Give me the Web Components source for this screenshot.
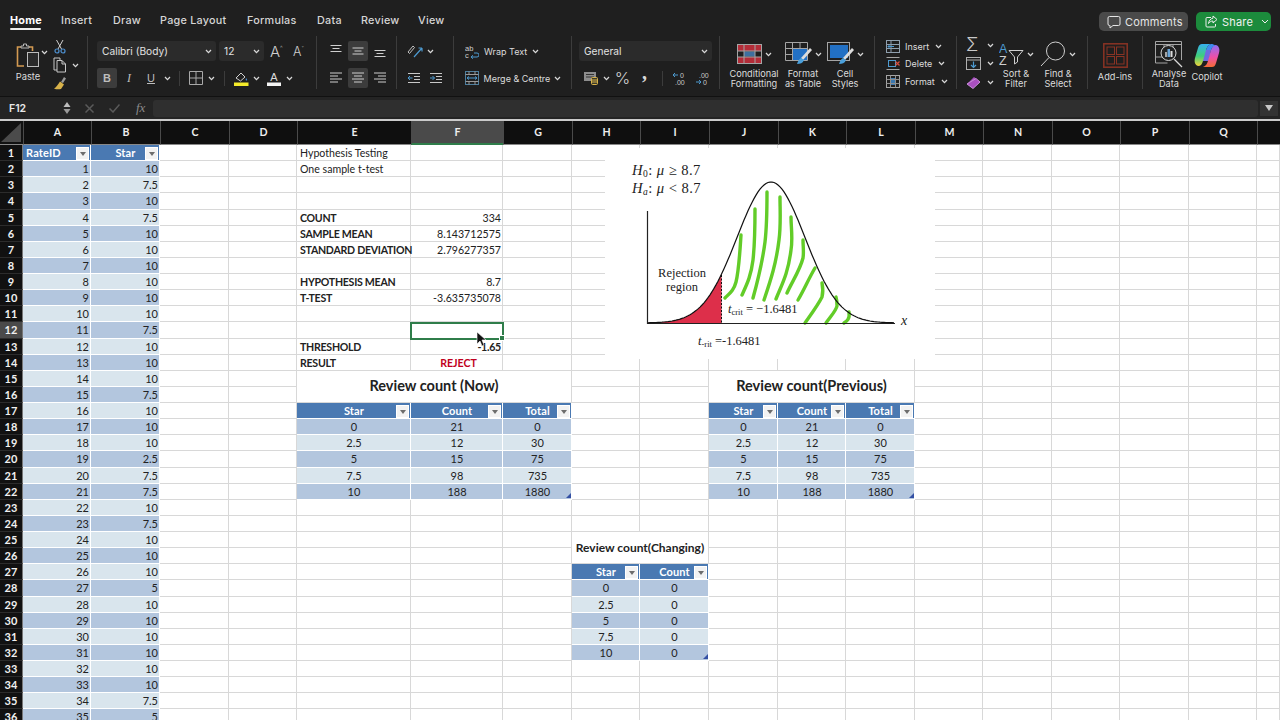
<!DOCTYPE html>
<html>
<head>
<meta charset="utf-8">
<title>Hypothesis Testing</title>
<style>
  html, body { margin: 0; padding: 0; background: #1f1f1f; }
  body { width: 1280px; height: 720px; overflow: hidden; font-family: Inter, "Liberation Sans", sans-serif; }
</style>
</head>
<body>
<xl-tabs></xl-tabs>
<xl-ribbon></xl-ribbon>
<xl-formula></xl-formula>
<xl-sheet></xl-sheet>

<script>
// componente base: shadow abierto con el html que devuelve la clase
class XlBase extends HTMLElement {
  constructor() {
    super();
    this.attachShadow({ mode: "open" });
  }
  connectedCallback() {
    this.shadowRoot.innerHTML = this.html();
  }
}

class XlChev extends XlBase {
  html() {
    return `<style>:host{display:inline-flex;align-items:center;flex:none}</style>
    <svg width="7" height="5" viewBox="0 0 7 5"><path d="M1 1l2.5 2.6L6 1" fill="none" stroke="#d8d8d8" stroke-width="1.3"/></svg>`;
  }
}
customElements.define("xl-chev", XlChev);

// lineas de alineacion: w = anchos separados por coma, a = left|center|right, t = desplazamiento
class XlLines extends XlBase {
  html() {
    const a = this.getAttribute("a") || "center";
    const t = +(this.getAttribute("t") || 0);
    const g = +(this.getAttribute("g") || 3);
    const ws = this.getAttribute("w").split(",").map(Number);
    const l = ws.map((w, i) => {
      const x = a === "left" ? 1 : a === "right" ? 13 - w : 7 - w / 2;
      const y = t + i * g + 0.5;
      return `<path d="M${x} ${y}h${w}" stroke="#cfcfcf" stroke-width="1"/>`;
    }).join("");
    return `<style>:host{display:inline-flex;flex:none}</style><svg width="14" height="14" viewBox="0 0 14 14">${l}</svg>`;
  }
}
customElements.define("xl-lines", XlLines);

class XlGroup extends XlBase {
  html() {
    return `<style>
      :host{display:flex;flex:none;box-sizing:border-box;height:53px;border-right:1px solid #3c3c3c;width:${this.getAttribute("w")}px}
    </style><slot></slot>`;
  }
}
customElements.define("xl-group", XlGroup);

// boton grande con icono arriba y etiqueta abajo
class XlBig extends XlBase {
  html() {
    return `<style>
      :host{display:flex;flex-direction:column;align-items:center;flex:none;padding-top:3px;font-size:9.2px;line-height:10px;color:#dcdcdc;text-align:center;white-space:nowrap}
      .top{height:32.5px;display:flex;align-items:center;justify-content:center;gap:3px}
    </style><div class="top"><slot name="icon"></slot></div><div><slot></slot></div>`;
  }
}
customElements.define("xl-big", XlBig);

class XlTabs extends XlBase {
  html() {
    const tabs = [["Home", 10], ["Insert", 61], ["Draw", 113], ["Page Layout", 160], ["Formulas", 247], ["Data", 317], ["Review", 361], ["View", 418]];
    const anchos = [31, 30, 26, 64, 48, 24, 37, 26];
    return `<style>
      :host{display:flex;height:36px;background:#1f1f1f;color:#d6d6d6;font-size:10.8px;font-weight:500;letter-spacing:.25px}
      .lista{display:flex;padding:0 0 0 10px}
      .tab{height:36px;box-sizing:border-box;padding-top:14px;white-space:nowrap;text-align:center}
      .on{color:#fff;font-weight:700;position:relative}
      .on::after{content:"";position:absolute;left:0;right:0;top:28px;height:2px;background:#eee;border-radius:1px}
      .der{margin-left:auto;display:flex;gap:8px;padding:12px 9px 0 0;align-items:flex-start}
      .btn{height:19px;border-radius:5px;display:flex;align-items:center;gap:4px;box-sizing:border-box;font-size:11px;letter-spacing:.2px;font-weight:400}
      .com{width:89px;background:#4a4a4a;padding-left:8px;color:#e6e6e6}
      .sha{width:75px;background:#1c8b3c;padding-left:9px;color:#f2f2f2}
    </style>
    <div class="lista">${tabs.map((t, i) => `<div class="tab ${i ? "" : "on"}" style="width:${anchos[i]}px;margin-right:${i < 7 ? tabs[i + 1][1] - t[1] - anchos[i] : 0}px">${t[0]}</div>`).join("")}</div>
    <div class="der">
      <div class="btn com"><svg width="14" height="14" viewBox="0 0 14 14"><path d="M2.5 1.5h9a1.5 1.5 0 0 1 1.5 1.5v6a1.5 1.5 0 0 1-1.5 1.5H6l-3 2.5v-2.5h-.5A1.5 1.5 0 0 1 1 9V3a1.5 1.5 0 0 1 1.5-1.5z" fill="none" stroke="#e6e6e6"/></svg>Comments</div>
      <div class="btn sha"><svg width="13" height="13" viewBox="0 0 13 13"><path d="M6 2.5H2a1 1 0 0 0-1 1V11a1 1 0 0 0 1 1h7.500a1 1 0 0 0 1-1V9" fill="none" stroke="#eee"/><path d="M8 1l4 3.500-4 3.500V6c-2 0-3.500 1-4.500 2.500C3.800 6 5.500 3.500 8 3.200z" fill="none" stroke="#eee"/></svg>Share<svg style="margin-left:4px" width="8" height="5" viewBox="0 0 8 5"><path d="M1 1l3 3 3-3" fill="none" stroke="#eee"/></svg></div>
    </div>`;
  }
}
customElements.define("xl-tabs", XlTabs);

class XlRibbon extends XlBase {
  html() {
    return `<style>
      :host{display:flex;height:61px;background:#1f1f1f;color:#dcdcdc;font-size:9px;box-sizing:border-box;border-bottom:1px solid #111}
      .col{display:flex;flex-direction:column;padding-top:5px;gap:7px}
      .row{display:flex;align-items:center;height:20px;flex:none}
      .box{background:#2b2b2b;border-radius:3px;height:20px;display:flex;align-items:center;box-sizing:border-box;padding:0 4px 0 5px;justify-content:space-between;font-size:10.2px;color:#e2e2e2}
      .act{width:20px;height:20px;background:#3c3c3c;border-radius:2px;display:flex;align-items:center;justify-content:center;flex:none}
      .ic{width:20px;height:20px;display:flex;align-items:center;justify-content:center;flex:none}
      .sep{width:1px;height:15px;background:#3c3c3c;flex:none}
      .small{display:flex;flex-direction:column;justify-content:space-between}
      svg{display:block;flex:none}
      .t{white-space:nowrap}
    </style>

    <xl-group w="88">
      <xl-big style="width:30px;margin-left:13px;font-size:9.4px">
        <svg slot="icon" width="24" height="25" viewBox="0 0 24 25"><path d="M5 4H1.500v19H8" fill="none" stroke="#d39a52" stroke-width="1.6"/><path d="M13 4h3.500v4" fill="none" stroke="#d39a52" stroke-width="1.6"/><path d="M5 5V3h2.500V1h3v2H13v2z" fill="none" stroke="#b9b9b9"/><rect x="11.500" y="9.500" width="11" height="14" fill="#2a2a2a" stroke="#bdbdbd"/></svg>
        Paste
      </xl-big>
      <xl-chev style="height:7px;align-self:flex-start;margin:13px 0 0 -2px"></xl-chev>
      <div style="display:flex;flex-direction:column;margin-left:5px;padding-top:4px;gap:3px">
        <svg width="14" height="14" viewBox="0 0 14 14"><path d="M3.500 0l5 9M10 0L5 9" stroke="#cfcfcf" stroke-width="1"/><circle cx="4" cy="11" r="2" fill="none" stroke="#4d8fcf" stroke-width="1.200"/><circle cx="10" cy="11" r="2" fill="none" stroke="#4d8fcf" stroke-width="1.200"/></svg>
        <div style="display:flex;align-items:center;gap:5px;height:17px">
          <svg width="14" height="16" viewBox="0 0 14 16"><path d="M4 13H1V1h6v2" fill="none" stroke="#c8c8c8"/><path d="M4 3.500h5l3.500 3.500v8H4z" fill="none" stroke="#c8c8c8"/><path d="M9 3.500V7h3.500" fill="none" stroke="#c8c8c8"/></svg>
          <xl-chev></xl-chev>
        </div>
        <svg width="14" height="14" viewBox="0 0 14 14"><path d="M8 6l3-5 2 1.500L10 7z" fill="#9a9a9a"/><path d="M7 5.500l4 3-3 4.500c-2 .5-5 .5-7-.5 2-1 4-4 6-7z" fill="#d8b24a"/></svg>
      </div>
    </xl-group>

    <xl-group w="229">
      <div class="col" style="padding-left:9px">
        <div class="row">
          <div class="box" style="width:119px"><span class="t">Calibri (Body)</span><xl-chev></xl-chev></div>
          <div class="box" style="width:45px;margin-left:3px"><span>12</span><xl-chev></xl-chev></div>
          <span style="font-size:15px;font-weight:300;margin-left:6px;width:23px;color:#cfcfcf">A<sup style="font-size:6px;vertical-align:7px">^</sup></span>
          <span style="font-size:12.500px;font-weight:300;width:20px;color:#cfcfcf">A<sup style="font-size:6px;vertical-align:5px">ˇ</sup></span>
        </div>
        <div class="row">
          <div class="act" style="font:700 11px 'Liberation Sans';color:#bdbdbd">B</div>
          <div class="ic" style="margin-left:2px;font:italic 12px 'Liberation Serif';color:#bdbdbd">I</div>
          <div class="ic" style="margin-left:2px;font:11px 'Liberation Sans';color:#bdbdbd;text-decoration:underline">U</div>
          <xl-chev style="margin-left:3px"></xl-chev>
          <div class="sep" style="margin-left:8px"></div>
          <svg style="margin-left:9px" width="14" height="14" viewBox="0 0 14 14"><path d="M.5.5h13v13H.5zM7 .5v13M.5 7h13" fill="none" stroke="#a9a9a9"/></svg>
          <xl-chev style="margin-left:5px"></xl-chev>
          <div class="sep" style="margin-left:9px"></div>
          <svg style="margin-left:9px" width="15" height="15" viewBox="0 0 15 15"><path d="M2 7l5-5 4 4-4.500 4z" fill="none" stroke="#d0d0d0"/><path d="M12 7c1 1.200 1.500 2 .8 2.500-.8.400-1.500-.6-.8-2.500z" fill="#4d8fcf"/><rect x="0" y="11.500" width="14.500" height="3.500" fill="#f4ea2a"/></svg>
          <xl-chev style="margin-left:4px"></xl-chev>
          <svg style="margin-left:7px" width="14" height="15" viewBox="0 0 14 15"><text x="7" y="9.500" font-family="Liberation Sans" font-size="11" text-anchor="middle" fill="#dcdcdc">A</text><rect y="11.500" width="14" height="3.500" fill="#f4f4f4"/></svg>
          <xl-chev style="margin-left:5px"></xl-chev>
        </div>
      </div>
    </xl-group>

    <xl-group w="80">
      <div class="col" style="padding-left:9px">
        <div class="row">
          <div class="ic"><xl-lines w="11,7,11" t="1"></xl-lines></div>
          <div class="act" style="margin-left:2px"><xl-lines w="11,7,11" t="3.500"></xl-lines></div>
          <div class="ic" style="margin-left:2px"><xl-lines w="11,7,11" t="6"></xl-lines></div>
        </div>
        <div class="row">
          <div class="ic"><xl-lines w="12,8,12,8" a="left" t="1.500"></xl-lines></div>
          <div class="act" style="margin-left:2px"><xl-lines w="12,8,12,8" t="1.500"></xl-lines></div>
          <div class="ic" style="margin-left:2px"><xl-lines w="12,8,12,8" a="right" t="1.500"></xl-lines></div>
        </div>
      </div>
    </xl-group>

    <xl-group w="57">
      <div class="col" style="padding-left:10px">
        <div class="row">
          <svg width="16" height="15" viewBox="0 0 16 15"><path d="M1 8l5-6 1.500 1.500L2.500 9.500z" fill="none" stroke="#c0c0c0"/><path d="M7 13L15 4M15 4h-3.500M15 4v3.500" fill="none" stroke="#4d9ad0" stroke-width="1.200"/></svg>
          <xl-chev style="margin-left:4px"></xl-chev>
        </div>
        <div class="row" style="gap:8px">
          <svg width="14" height="13" viewBox="0 0 14 13"><path d="M1 1.500h12M7 4.500h6M7 7.500h6M1 10.500h12" stroke="#c8c8c8"/><path d="M5.500 6H1M3 4L1 6l2 2" fill="none" stroke="#4d9ad0"/></svg>
          <svg width="14" height="13" viewBox="0 0 14 13"><path d="M1 1.500h12M7 4.500h6M7 7.500h6M1 10.500h12" stroke="#c8c8c8"/><path d="M1 6h4.500M3.500 4l2 2-2 2" fill="none" stroke="#4d9ad0"/></svg>
        </div>
      </div>
    </xl-group>

    <xl-group w="118">
      <div class="col" style="padding-left:11px">
        <div class="row">
          <svg width="14" height="15" viewBox="0 0 14 15"><text x="0" y="6.500" font-family="Liberation Sans" font-size="7.500" fill="#d0d0d0">ab</text><text x="0" y="14" font-family="Liberation Sans" font-size="7.500" fill="#d0d0d0">c</text><path d="M9 9h3a1.500 1.500 0 0 1 0 4H6.500M8 11.300l-2 1.700 2 1.700" fill="none" stroke="#4d9ad0"/></svg>
          <span class="t" style="margin-left:5px">Wrap Text</span><xl-chev style="margin-left:5px"></xl-chev>
        </div>
        <div class="row">
          <svg width="14" height="14" viewBox="0 0 14 14"><rect x=".5" y=".5" width="13" height="13" fill="none" stroke="#4d7f9f"/><path d="M.5 3.500h13M.5 10.500h13M4 .5v3M10 .5v3M4 10.500v3M10 10.500v3" stroke="#9a9a9a"/><path d="M2 7h10M4 5.500L2 7l2 1.500M10 5.500L12 7l-2 1.500" fill="none" stroke="#4d9ad0"/></svg>
          <span class="t" style="margin-left:4.500px">Merge &amp; Centre</span><xl-chev style="margin-left:4px"></xl-chev>
        </div>
      </div>
    </xl-group>

    <xl-group w="148">
      <div class="col" style="padding-left:7px">
        <div class="row"><div class="box" style="width:133px"><span>General</span><xl-chev></xl-chev></div></div>
        <div class="row">
          <svg style="margin-left:5px" width="14" height="14" viewBox="0 0 14 14"><rect x="0" y="1" width="12" height="9" fill="#8d8d8d"/><path d="M2 3.500h8M2 6h8" stroke="#333"/><rect x="7.500" y="6.500" width="6" height="7" rx="1" fill="#3a3a2a" stroke="#d8b24a"/><path d="M8 9h5M8 11h5" stroke="#d8b24a"/></svg>
          <xl-chev style="margin-left:5px"></xl-chev>
          <span style="font-size:16.500px;font-weight:300;margin-left:3px;width:19px;color:#d0d0d0;text-align:center">%</span>
          <span style="font:700 20px 'Liberation Serif';margin-left:10px;width:10px;color:#d8d8d8;position:relative;top:-6px">,</span>
          <div class="sep" style="margin-left:10px"></div>
          <svg style="margin-left:9px" width="15" height="15" viewBox="0 0 15 15"><path d="M6 4H1M3 2L1 4l2 2" fill="none" stroke="#4d9ad0"/><text x="8" y="7" font-family="Liberation Sans" font-size="7" fill="#c8c8c8">0</text><text x="3" y="14" font-family="Liberation Sans" font-size="7" fill="#c8c8c8">.00</text></svg>
          <svg style="margin-left:8px" width="15" height="15" viewBox="0 0 15 15"><text x="4" y="7" font-family="Liberation Sans" font-size="7" fill="#c8c8c8">.00</text><path d="M1 11h5M4 9l2 2-2 2" fill="none" stroke="#4d9ad0"/><text x="8" y="14" font-family="Liberation Sans" font-size="7" fill="#c8c8c8">0</text></svg>
        </div>
      </div>
    </xl-group>

    <xl-group w="155">
      <xl-big style="width:48px;margin-left:10px">
        <svg slot="icon" width="25" height="20" viewBox="0 0 25 20"><rect x=".5" y=".5" width="24" height="19" fill="none" stroke="#a5a5a5"/><rect x="1" y="1" width="23" height="6" fill="#b32c38"/><rect x="1" y="13" width="23" height="6" fill="#b32c38"/><rect x="7" y="7.500" width="11" height="5" fill="#3d6f9f"/><path d="M.5 7h24M.5 13h24M7 .5v19M18 .5v19" stroke="#a5a5a5"/></svg>
        <xl-chev slot="icon"></xl-chev>
        Conditional<br>Formatting
      </xl-big>
      <xl-big style="width:44px;margin-left:3px">
        <svg slot="icon" width="27" height="24" viewBox="0 0 27 24"><path d="M.5.500h22v18H.5zM.5 6.500h22M.5 12.500h22M7.500.5v18M15 .5v18" fill="none" stroke="#a5a5a5"/><rect x="8" y="7" width="14" height="11" fill="#2270c4"/><path d="M25 6l-9 10 2 2 9-10z" fill="#dcdcdc"/><path d="M16 16c-2 1-3 3-4 6 3 0 6-1 7-4z" fill="#4aa0dc"/></svg>
        <xl-chev slot="icon"></xl-chev>
        Format<br>as Table
      </xl-big>
      <xl-big style="width:40px">
        <svg slot="icon" width="27" height="24" viewBox="0 0 27 24"><rect x=".5" y=".5" width="22" height="18" fill="none" stroke="#a5a5a5"/><rect x="3" y="3" width="18" height="13" fill="#2270c4"/><path d="M25 6l-9 10 2 2 9-10z" fill="#dcdcdc"/><path d="M16 16c-2 1-3 3-4 6 3 0 6-1 7-4z" fill="#4aa0dc"/></svg>
        <xl-chev slot="icon"></xl-chev>
        Cell<br>Styles
      </xl-big>
    </xl-group>

    <xl-group w="82">
      <div class="small" style="padding:2px 0 0 11px;height:51px">
        <div class="row" style="height:16px"><svg width="14" height="13" viewBox="0 0 14 13"><rect x=".5" y=".5" width="13" height="12" fill="none" stroke="#8f9fae"/><path d="M.5 4.500h13M.5 8.500h13M5 .5v12" stroke="#8f9fae"/><path d="M8 6.500H2M4 4.500l-2 2 2 2" fill="none" stroke="#4d9ad0"/></svg><span style="margin-left:5px">Insert</span><xl-chev style="margin-left:6px"></xl-chev></div>
        <div class="row" style="height:16px"><svg width="14" height="13" viewBox="0 0 14 13"><path d="M.5.500h13M.5 12.500h13" stroke="#a5a5a5"/><rect x="2.500" y="3.500" width="7" height="6" fill="none" stroke="#4d9ad0"/><path d="M9.500 4.500l4 4M13.500 4.500l-4 4" stroke="#d64a3a" stroke-width="1.200"/></svg><span style="margin-left:5px">Delete</span><xl-chev style="margin-left:6px"></xl-chev></div>
        <div class="row" style="height:16px"><svg width="14" height="14" viewBox="0 0 14 14"><rect x=".5" y="1.500" width="13" height="12" fill="none" stroke="#a5a5a5"/><rect x="4" y="4" width="6" height="7" fill="#3a78b0"/><path d="M.5 5.500h13M.5 9.500h13M4.500 1.500v12M9.500 1.500v12" stroke="#8f8f8f"/></svg><span style="margin-left:5px">Format</span><xl-chev style="margin-left:6px"></xl-chev></div>
      </div>
    </xl-group>

    <xl-group w="131">
      <div class="small" style="padding:1px 0 0 9px;height:53px;width:28px;flex:none">
        <div class="row" style="height:16px;justify-content:space-between"><span style="font-size:18px;font-weight:300;color:#c8c8c8;line-height:16px">Σ</span><xl-chev></xl-chev></div>
        <div class="row" style="height:16px;justify-content:space-between"><svg width="15" height="13" viewBox="0 0 15 13"><rect x=".5" y=".5" width="14" height="12" fill="none" stroke="#b0b0b0"/><path d="M.5 3h14" stroke="#b0b0b0"/><path d="M7.500 4.500v6M5 8l2.500 2.500L10 8" fill="none" stroke="#4d9ad0" stroke-width="1.200"/></svg><xl-chev></xl-chev></div>
        <div class="row" style="height:16px;justify-content:space-between"><svg width="15" height="13" viewBox="0 0 15 13"><path d="M1 8L8 1l6 5-7 6.500z" fill="#a94fc0"/><path d="M3.500 6.500L10 2.500l4 3.500-7 6.500L1 8z" fill="none" stroke="#c78fd8"/></svg><xl-chev></xl-chev></div>
      </div>
      <xl-big style="width:40px;margin-left:2px">
        <svg slot="icon" width="25" height="25" viewBox="0 0 25 25"><text x="0" y="11" font-family="Liberation Sans" font-size="12.500" fill="#4d9ad0">A</text><text x="0" y="23" font-family="Liberation Sans" font-size="12.500" fill="#cfcfcf">Z</text><path d="M10 8.500h14l-5.500 6.500v5l-3 2v-7z" fill="none" stroke="#cfcfcf"/></svg>
        <xl-chev slot="icon"></xl-chev>
        Sort &amp;<br>Filter
      </xl-big>
      <xl-big style="width:40px;margin-left:2px">
        <svg slot="icon" width="26" height="26" viewBox="0 0 26 26"><circle cx="15.500" cy="10" r="9" fill="none" stroke="#cfcfcf"/><path d="M9 16.500L1 25" stroke="#cfcfcf"/></svg>
        <xl-chev slot="icon"></xl-chev>
        Find &amp;<br>Select
      </xl-big>
    </xl-group>

    <xl-group w="55">
      <xl-big style="width:54px">
        <svg slot="icon" width="25" height="25" viewBox="0 0 25 25"><rect x=".8" y=".8" width="23.400" height="23.400" fill="none" stroke="#8a3324" stroke-width="1.500"/><rect x="4" y="4" width="7.500" height="7.500" fill="none" stroke="#8a3324"/><rect x="13.500" y="4" width="7.500" height="7.500" fill="none" stroke="#8a3324"/><rect x="4" y="13.500" width="7.500" height="7.500" fill="none" stroke="#8a3324"/><rect x="13.500" y="13.500" width="7.500" height="7.500" fill="none" stroke="#8a3324"/></svg>
        Add-ins
      </xl-big>
    </xl-group>

    <div style="display:flex;height:53px;flex:none">
      <xl-big style="width:40px;margin-left:6px">
        <svg slot="icon" width="28" height="27" viewBox="0 0 28 27"><path d="M.5 22V.5h26V19M.5 3.500h26M.5 16h8M.5 22h12M9 3.500V9M18 3.500V7" fill="none" stroke="#a5a5a5"/><circle cx="13.500" cy="12" r="7.500" fill="#222" stroke="#d8d8d8"/><rect x="10" y="11" width="2" height="5" fill="#a5a5a5"/><rect x="12.500" y="8" width="2.500" height="8" fill="#6aa5d8"/><rect x="15.500" y="10" width="2" height="6" fill="#dcdcdc"/><path d="M19 18l8 8" stroke="#d8d8d8" stroke-width="1.200"/></svg>
        Analyse<br>Data
      </xl-big>
      <xl-big style="width:36px">
        <svg slot="icon" width="26" height="25" viewBox="0 0 26 25">
          <defs>
            <linearGradient id="cp1" x1="0" y1="0" x2="0" y2="1"><stop offset="0" stop-color="#36b0f0"/><stop offset=".55" stop-color="#3fcf7a"/><stop offset="1" stop-color="#f0d23a"/></linearGradient>
            <linearGradient id="cp2" x1="0" y1="0" x2="0" y2="1"><stop offset="0" stop-color="#8c6ff5"/><stop offset=".55" stop-color="#ee4fa8"/><stop offset="1" stop-color="#f66c34"/></linearGradient>
          </defs>
          <path d="M10 7h7l-2 11H8z" fill="#6f6ae0"/>
          <path d="M8 1h9c-3 1-4 3-5 6L9 18c-1 3-2 5-5 5-3-1-4-4-3-8L4 5c1-3 2-4 4-4z" fill="url(#cp1)"/>
          <path d="M18 24H9c3-1 4-3 5-6l3-11c1-3 2-5 5-5 3 1 4 4 3 8l-3 10c-1 3-2 4-4 4z" fill="url(#cp2)"/>
          <path d="M8 1h9c2 0 3 .5 4 1.500-2 .5-3 2-4 4.500h-5c1-3 2-5 5-6z" fill="#3f8cf0"/>
        </svg>
        Copilot
      </xl-big>
    </div>`;
  }
}
customElements.define("xl-ribbon", XlRibbon);

class XlFormula extends XlBase {
  html() {
    return `<style>
      :host{display:flex;align-items:center;height:22px;background:#242424;color:#e8e8e8;border-bottom:2px solid #cbcbcb;font-size:10.5px;font-weight:600;box-sizing:content-box}
      .nom{padding-left:9px;flex:none;width:54px}
      .ent{flex:1;height:17px;background:#2f2f2f;border-radius:3px;margin:0 2px 0 0}
      .fl{width:18px;height:15px;background:#333;display:flex;align-items:center;justify-content:center;margin-right:2px;flex:none}
      svg{flex:none;display:block}
    </style>
    <div class="nom">F12</div>
    <svg width="8" height="14" viewBox="0 0 8 14"><path d="M4 1l3.500 5H.5z" fill="#bdbdbd"/><path d="M4 13L.5 8h7z" fill="#9a9a9a"/></svg>
    <svg style="margin-left:14px" width="9" height="9" viewBox="0 0 9 9"><path d="M.5.5l8 8M8.500.5l-8 8" stroke="#5a5a5a" stroke-width="1.500"/></svg>
    <svg style="margin-left:15px" width="11" height="9" viewBox="0 0 11 9"><path d="M.5 4.500l3.500 3.500 6.500-7.500" fill="none" stroke="#5a5a5a" stroke-width="1.500"/></svg>
    <span style="margin-left:16px;width:15px;font:italic 13px 'Liberation Serif';color:#8a8a8a">fx</span>
    <div class="ent" style="margin-left:2px"></div>
    <div class="fl"><svg width="8" height="6" viewBox="0 0 8 6"><path d="M0 0h8L4 6z" fill="#c8c8c8"/></svg></div>`;
  }
}
customElements.define("xl-formula", XlFormula);

// imagen pegada sobre la hoja: campana con region de rechazo
class XlChart extends XlBase {
  html() {
    const y = x => 173 - 141 * Math.exp(-((x - 161) ** 2) / (2 * 34 * 34));
    let curva = "", roja = "M38 173";
    for (let x = 38; x <= 285; x += 2) curva += (x === 38 ? "M" : "L") + x + " " + y(x).toFixed(1);
    for (let x = 38; x <= 111; x += 2) roja += "L" + x + " " + y(x).toFixed(1);
    roja += "L111.500 " + y(111.5).toFixed(1) + "L111.500 173Z";
    const verdes = [
      "M115 148C120 143 124 140 126 132C129 120 130 100 131 85",
      "M132 145C137 134 141 126 143 110C145 92 145 75 145 59",
      "M143 148C148 130 152 115 155 92C157 75 157 60 157 42",
      "M154 150C160 132 166 115 169 90C171 75 170 60 170 47",
      "M166 149C172 134 178 124 181 100C183 88 181 78 181 67",
      "M177 143C183 130 190 120 193 108C194 102 193 96 193 90",
      "M188 150C194 140 199 128 205 118",
      "M195 173C202 163 208 155 212 147C213 143 213 138 212 133",
      "M216 173C220 167 226 161 227 156C227 153 227 150 226 147",
      "M234 173C237 171 240 169 239 162"
    ];
    return `<style>
      :host{display:block;position:absolute;left:605px;top:27px;width:330px;height:211px;background:#fff;z-index:3}
      svg{display:block}
      text{font-family:"Liberation Serif",serif;fill:#222}
      .i{font-style:italic}
    </style>
    <svg width="330" height="211" viewBox="-5 -2 330 211">
      <text x="22" y="25" font-size="14.600" letter-spacing=".45"><tspan class="i">H</tspan><tspan font-size="9.500" dy="2">0</tspan><tspan dy="-2">: </tspan><tspan class="i">μ</tspan> ≥ 8.7</text>
      <text x="22" y="43" font-size="14.600" letter-spacing=".45"><tspan class="i">H</tspan><tspan class="i" font-size="9.500" dy="2">a</tspan><tspan dy="-2">: </tspan><tspan class="i">μ</tspan> &lt; 8.7</text>
      <path d="${roja}" fill="#dd2f4a"/>
      ${verdes.map(d => `<path d="${d}" fill="none" stroke="#62cc28" stroke-width="3.400" stroke-linecap="round"/>`).join("")}
      <path d="M37.500 61V173.500H285" fill="none" stroke="#222" stroke-width="1.200"/>
      <path d="${curva}" fill="none" stroke="#111" stroke-width="1.200"/>
      <path d="M111.500 125V173" stroke="#111" stroke-width="1" stroke-dasharray="2 1.500"/>
      <text x="72" y="127" font-size="12.500" text-anchor="middle">Rejection</text>
      <text x="72" y="141" font-size="12.500" text-anchor="middle">region</text>
      <text x="118" y="163" font-size="12.500"><tspan class="i">t</tspan><tspan font-size="8.500" dy="2">crit</tspan><tspan dy="-2"> = −1.6481</tspan></text>
      <text x="291" y="175" font-size="14" class="i">x</text>
      <text x="88" y="195" font-size="12.500"><tspan class="i">t</tspan><tspan font-size="8.500" dy="2">-rit</tspan><tspan dy="-2"> =-1.6481</tspan></text>
    </svg>`;
  }
}
customElements.define("xl-chart", XlChart);

class XlSheet extends XlBase {
  html() {
    const anchos = [23, 68, 69, 69, 68, 114, 92, 69, 68, 69, 69, 68, 69, 68, 69, 68, 69, 68, 23];
    const letras = "ABCDEFGHIJKLMNOPQR";
    const nCol = 18, nFil = 36;
    const celdas = {};
    const ocultas = {};
    const id = (c, f) => c + "," + f;
    const pon = (c, f, o) => { celdas[id(c, f)] = o; };
    const col = l => letras.indexOf(l) + 1;

    const tabla = (c0, f0, heads, filas, alinear) => {
      heads.forEach((h, i) => pon(c0 + i, f0, { t: h, k: "hd", fil: 1 }));
      filas.forEach((fila, n) => fila.forEach((v, i) => pon(c0 + i, f0 + 1 + n, {
        t: v, k: (n % 2 ? "cl" : "os") + " " + alinear,
        marca: n === filas.length - 1 && i === fila.length - 1 && alinear === "cen"
      })));
    };
    const titulo = (c, f, span, t, k) => {
      pon(c, f, { t, k: "tit " + k, cs: span, rs: 2 });
      for (let a = 0; a < span; a++) for (let b = 0; b < 2; b++) if (a || b) ocultas[id(c + a, f + b)] = 1;
    };

    const stars = [10,7.5,10,7.5,10,10,10,10,10,10,7.5,10,10,10,7.5,10,10,10,2.5,7.5,7.5,10,7.5,10,10,10,5,10,10,10,10,10,10,7.5,5];
    tabla(1, 1, ["RateID", "Star"], stars.map((s, i) => [i + 1, s]), "der");
    celdas[id(1, 1)].k = "hd izq";

    [["Hypothesis Testing", 1], ["One sample t-test", 2]].forEach(([t, f]) => pon(col("E"), f, { t, k: "izq" }));
    [["COUNT", 5, "334"], ["SAMPLE MEAN", 6, "8.143712575"], ["STANDARD DEVIATION", 7, "2.796277357"],
     ["HYPOTHESIS MEAN", 9, "8.7"], ["T-TEST", 10, "-3.635735078"], ["THRESHOLD", 13, "-1.65"]].forEach(([t, f, v]) => {
      pon(col("E"), f, { t, k: "izq neg" });
      pon(col("F"), f, { t: v, k: "der" + (f === 13 ? " neg" : "") });
    });
    pon(col("E"), 14, { t: "RESULT", k: "izq neg" });
    pon(col("F"), 14, { t: "REJECT", k: "cen neg rojo" });

    const datos = [[0, 21, 0], [2.5, 12, 30], [5, 15, 75], [7.5, 98, 735], [10, 188, 1880]];
    titulo(col("E"), 15, 3, "Review count (Now)", "g");
    tabla(col("E"), 17, ["Star", "Count", "Total"], datos, "cen");
    titulo(col("J"), 15, 3, "Review count(Previous)", "g");
    tabla(col("J"), 17, ["Star", "Count", "Total"], datos, "cen");
    titulo(col("H"), 25, 2, "Review count(Changing)", "p");
    tabla(col("H"), 27, ["Star", "Count"], datos.map(d => [d[0], 0]), "cen");

    let h = `<div class="esq"><svg width="20" height="19" viewBox="0 0 20 19"><path d="M20 0v19H0z" fill="#4b4b4b"/></svg></div>`;
    for (let c = 1; c <= nCol; c++) h += `<div class="cab ${c === 6 ? "sel" : ""}" style="grid-area:1/${c + 1}">${c < nCol ? letras[c - 1] : ""}</div>`;
    for (let f = 1; f <= nFil; f++) {
      h += `<div class="fil ${f === 12 ? "sel" : ""}" style="grid-area:${f + 1}/1">${f}</div>`;
      for (let c = 1; c <= nCol; c++) {
        if (ocultas[id(c, f)]) continue;
        const o = celdas[id(c, f)] || { t: "", k: "" };
        const fin = `${o.rs ? "/span " + o.cs : ""}`;
        h += `<div class="c ${o.k}" style="grid-row:${f + 1}${o.rs ? "/span " + o.rs : ""};grid-column:${c + 1}${fin}">${o.t}${o.fil ? '<i class="fb"></i>' : ""}${o.marca ? '<i class="mk"></i>' : ""}</div>`;
      }
    }
    return `<style>
      :host{display:grid;position:relative;height:599px;overflow:hidden;background:#fff;color:#222;
        grid-template-columns:${anchos.map(a => a + "px").join(" ")};
        grid-template-rows:24px repeat(${nFil}, 16.13px);
        font:10.6px/16px Lato,"Liberation Sans",sans-serif}
      .esq{grid-area:1/1;background:#111;display:flex;align-items:center;justify-content:flex-end;border-bottom:1px solid #888;box-sizing:border-box;padding-right:2px}
      .cab{background:#0f0f0f;color:#eee;font-weight:700;text-align:center;line-height:23px;box-sizing:border-box;border-left:1px solid #4a4a4a;border-bottom:1px solid #888}
      .cab.sel{background:#4a4a4a;border-left-color:#4a4a4a;border-bottom:2px solid #2f7d4a}
      .fil{background:#111;color:#f0f0f0;font-weight:700;font-size:11px;text-align:center;line-height:16px;box-sizing:border-box;border-bottom:1px solid #2c2c2c;border-right:1px solid #777}
      .fil.sel{background:#4a4a4a}
      .c{position:relative;box-sizing:border-box;border-right:1px solid #d8d8d8;border-bottom:1px solid #d8d8d8;padding:0 1px 0 2px;white-space:nowrap;min-width:0}
      .izq{text-align:left;padding-left:3px}
      .der{text-align:right}
      .cen{text-align:center}
      .neg{font-weight:700;letter-spacing:-.27px}
      .rojo{color:#c00020;padding-left:5px;letter-spacing:0}
      .os{background:#b3c6de;border-color:#fff;font-size:11px}
      .cl{background:#d9e5ed;border-color:#fff;font-size:11px}
      .hd{background:#4a79b2;color:#fff;font-weight:700;font-size:11px;letter-spacing:.15px;text-align:center;border-color:#fff}
      .hd.izq{text-align:left}
      .fb{position:absolute;right:1px;top:1.500px;width:13px;height:13px;box-sizing:border-box;background:#f2f2f2;border:1px solid #fff}
      .fb::after{content:"";position:absolute;left:2.500px;top:4px;border:3.500px solid transparent;border-top:4px solid #6d6d6d;border-bottom:0}
      .mk{position:absolute;right:0;bottom:1px;width:0;height:0;border-left:5px solid transparent;border-bottom:5px solid #3450a4}
      .tit{display:flex;align-items:center;justify-content:center;font-weight:700;color:#222;padding:0}
      .tit.g{font-size:14.500px}
      .tit.p{font-size:12px}
      .rec{grid-area:13/7;margin:0 -1px -1px -1px;border:2px solid #2f7d4a;position:relative;z-index:2}
      .rec::after{content:"";position:absolute;right:-3px;bottom:-3px;width:4px;height:4px;background:#2f7d4a;border:1px solid #fff}
    </style>${h}
    <div class="rec"></div>
    <svg style="position:absolute;left:476px;top:211px;z-index:4" width="10" height="15" viewBox="0 0 10 15"><path d="M1 0v12l3-3 2 5 2-1-2-5h4z" fill="#111" stroke="#fff" stroke-width=".6"/></svg>
    <xl-chart></xl-chart>`;
  }
}
customElements.define("xl-sheet", XlSheet);
</script>
</body>
</html>
